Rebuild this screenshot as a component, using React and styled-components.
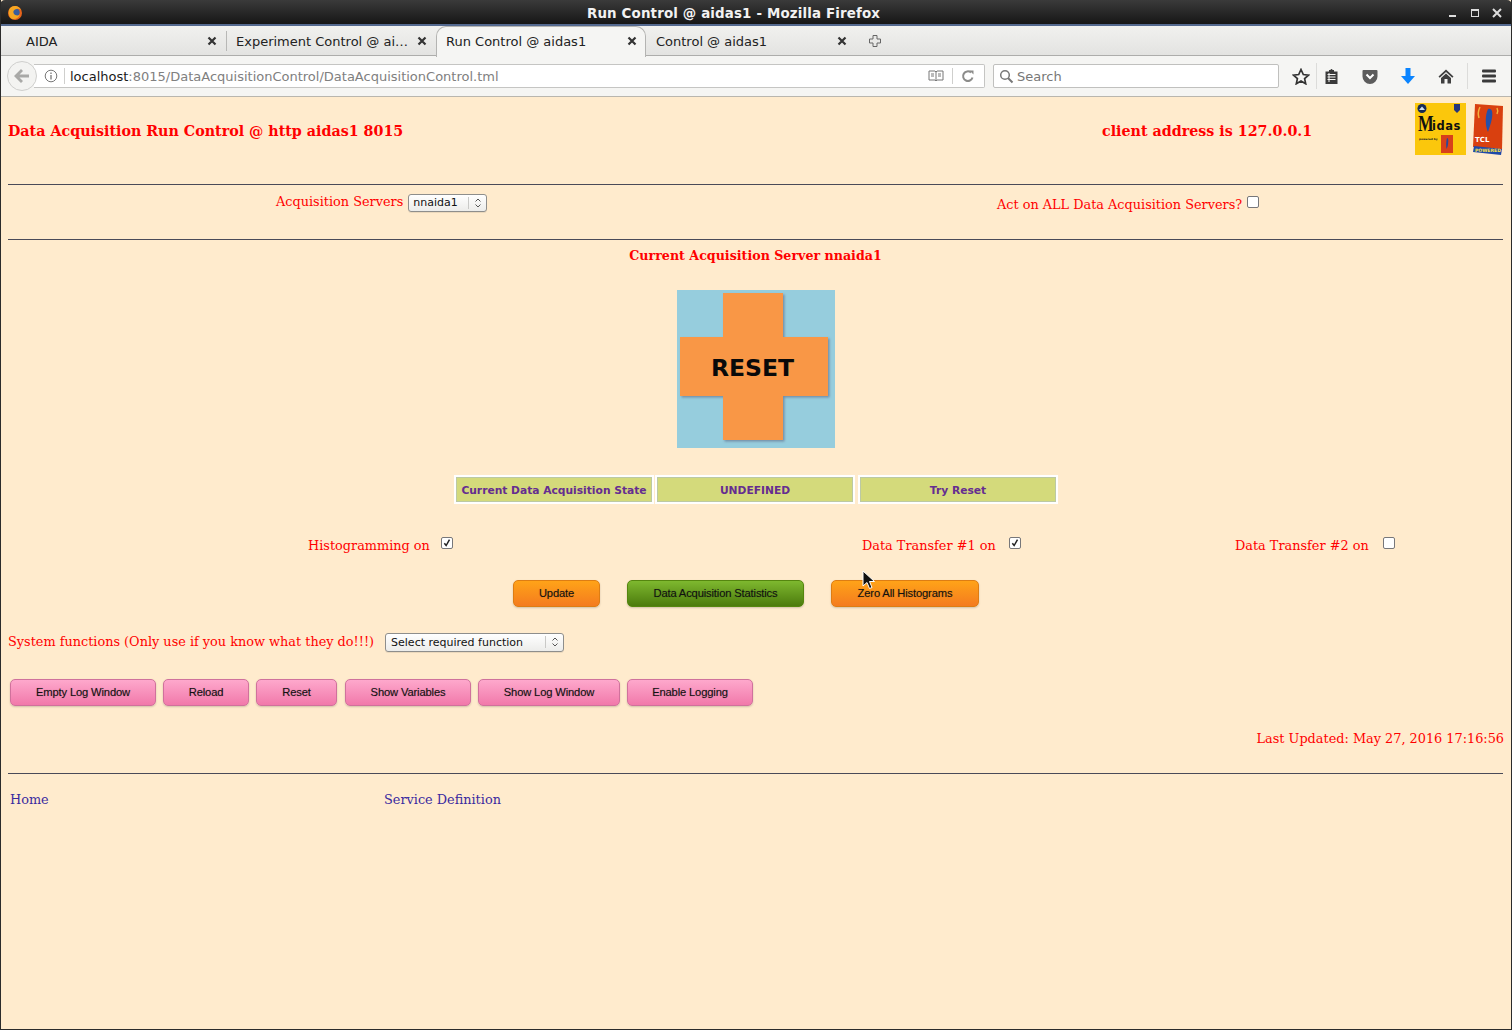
import React from "react";
import styled, { createGlobalStyle } from "styled-components";

const GlobalStyle = createGlobalStyle`
  html, body { margin: 0; padding: 0; height: 100%; background: #ffebcd; }
  #root { height: 100%; }
`;

const Window = styled.div`
  position: relative;
  width: 1512px;
  height: 1030px;
  overflow: hidden;
  display: flex;
  flex-direction: column;
  background: #ffebcd;
  border-left: 1px solid #2b2b2b;
  border-right: 1px solid #2b2b2b;
  border-bottom: 1px solid #2b2b2b;
  box-sizing: border-box;
`;

const TitleBar = styled.div`
  height: 22px;
  margin: 0 -1px;
  flex: none;
  display: flex;
  align-items: center;
  padding: 2px 10px 0 7px;
  background: linear-gradient(#3a3a3a, #2c2c2c 40%, #161616);
  border-bottom: 2px solid #54698f;
  border-radius: 5px 5px 0 0;
  color: #f2f2f2;
  font: bold 13.4px "DejaVu Sans", sans-serif;
`;

const TitleText = styled.div`
  flex: 1;
  text-align: center;
  padding-right: 4px;
  letter-spacing: 0.15px;
`;

const WinButtons = styled.div`
  display: flex;
  gap: 12px;
  align-items: center;
`;

const TabStrip = styled.div`
  height: 29px;
  flex: none;
  display: flex;
  align-items: center;
  padding-left: 15px;
  background: linear-gradient(#f1f1ef, #e3e3e1);
  border-bottom: 1px solid #adadab;
  font: 13px "DejaVu Sans", sans-serif;
  color: #222;
`;

const Tab = styled.div`
  position: relative;
  width: 210px;
  height: 100%;
  flex: none;
  box-sizing: border-box;
  display: flex;
  align-items: center;
  justify-content: space-between;
  padding: 1px 9px 0 10px;
  ${(p) =>
    p.$active &&
    `
    background: #f5f5f3;
    margin-bottom: -2px;
    height: calc(100% + 2px);
    padding: 0 8px 2px 9px;
    border-top: 1px solid #b4b4b2;
    border-radius: 10px 10px 0 0;
    border-left: 1px solid #b4b4b2;
    border-right: 1px solid #b4b4b2;
  `}
  ${(p) =>
    p.$divider &&
    `
    &::before {
      content: "";
      position: absolute;
      left: 0;
      top: 5px;
      bottom: 4px;
      width: 1px;
      background: #b8b8b6;
    }
  `}
`;

const TabLabel = styled.span`
  white-space: nowrap;
`;

const NewTab = styled.div`
  width: 38px;
  display: flex;
  justify-content: center;
  align-items: center;
`;

const NavBar = styled.div`
  height: 41px;
  flex: none;
  display: flex;
  align-items: center;
  padding: 0 0 0 6px;
  background: #f5f5f3;
  border-bottom: 1px solid #b9b6ae;
  box-sizing: border-box;
  font: 13px "DejaVu Sans", sans-serif;
`;

const BackCircle = styled.div`
  width: 30px;
  height: 30px;
  flex: none;
  box-sizing: border-box;
  border: 1px solid #cfcfcd;
  border-radius: 50%;
  background: #f3f3f1;
  display: flex;
  align-items: center;
  justify-content: center;
  position: relative;
  z-index: 1;
`;

const UrlBar = styled.div`
  width: 951px;
  height: 24px;
  margin-left: -3px;
  box-sizing: border-box;
  background: #fff;
  border: 1px solid #c5c5c3;
  border-left: none;
  border-radius: 0 2px 2px 0;
  display: flex;
  align-items: center;
  padding: 0 9px 0 10px;
`;

const UrlSep = styled.span`
  width: 1px;
  height: 16px;
  background: #cfcfcd;
  margin: ${(p) => p.$margin};
`;

const UrlText = styled.div`
  flex: 1;
  color: #808080;
  white-space: nowrap;
  b {
    font-weight: normal;
    color: #1a1a1a;
  }
`;

const SearchBox = styled.div`
  width: 286px;
  height: 24px;
  margin-left: 8px;
  box-sizing: border-box;
  background: #fff;
  border: 1px solid #c0c0be;
  border-radius: 2px;
  display: flex;
  align-items: center;
  gap: 3px;
  padding-left: 5px;
  color: #777;
`;

const Tools = styled.div`
  display: flex;
  align-items: center;
  margin-left: 13px;
`;

const ToolSlot = styled.div`
  width: ${(p) => p.$w || 38}px;
  margin-right: ${(p) => p.$mr || 0}px;
  display: flex;
  justify-content: center;
  align-items: center;
`;

const ToolSep = styled.span`
  width: 1px;
  height: 26px;
  margin-left: ${(p) => p.$ml}px;
  background: #dcdcda;
`;

const Page = styled.main`
  flex: 1;
  padding: 0 8px 0 7px;
  color: #ff0000;
  font: 12.85px "DejaVu Serif", serif;
`;

const HeaderRow = styled.header`
  height: 87px;
  box-sizing: border-box;
  padding-bottom: 19px;
  display: grid;
  grid-template-columns: 1094px 313px auto;
  align-items: center;
  font-size: 14.27px;
  font-weight: bold;
`;

const Logos = styled.div`
  display: flex;
  gap: 6px;
  margin-bottom: 4px;
`;

const Rule = styled.hr`
  margin: 0;
  border: none;
  height: 1px;
  background: #4a4a58;
`;

const ServersRow = styled.section`
  height: 54px;
  display: grid;
  padding-left: 268px;
  grid-template-columns: 721px auto;
`;

const ServerCell = styled.div`
  display: flex;
  align-items: flex-start;
  padding-top: ${(p) => p.$top}px;
  line-height: 16px;
  white-space: nowrap;
`;

const ServerCaption = styled.span`
  margin-right: 5px;
`;

const SelectBox = styled.div`
  width: ${(p) => p.$w}px;
  height: ${(p) => p.$h}px;
  box-sizing: border-box;
  border: 1px solid #8e8e8c;
  border-radius: 3px;
  background: linear-gradient(#ffffff, #ececea);
  color: #111;
  display: flex;
  align-items: center;
  padding: 0 0 1px 4px;
  font: 11px "DejaVu Sans", sans-serif;
  box-shadow: 0 1px 0 rgba(0, 0, 0, 0.08);
`;

const SelectLabel = styled.span`
  flex: 1;
  white-space: nowrap;
  padding-left: ${(p) => p.$pad || 0}px;
`;

const SelectArrow = styled.span`
  width: 17px;
  height: 12px;
  border-left: 1px solid #c9c9c7;
  display: flex;
  justify-content: center;
  align-items: center;
`;

const CheckBox = styled.span`
  width: 12px;
  height: 12px;
  flex: none;
  box-sizing: border-box;
  display: inline-flex;
  align-items: center;
  justify-content: center;
  background: #fff;
  border: 1px solid #77777a;
  border-radius: 2px;
  margin-left: ${(p) => p.$gap || 0}px;
  margin-top: ${(p) => p.$top || 0}px;
`;

const CurrentServer = styled.h2`
  margin: 0;
  padding-top: 8px;
  text-align: center;
  font-size: 12.65px;
  line-height: 16px;
  font-weight: bold;
`;

const ResetTile = styled.div`
  width: 158px;
  height: 158px;
  margin: 26px auto 0;
`;

const StateTable = styled.div`
  margin-top: 27px;
  padding-left: 446px;
  display: flex;
`;

const StateCell = styled.div`
  box-sizing: border-box;
  width: 200px;
  height: 29px;
  margin-right: ${(p) => p.$mr || 0}px;
  padding-top: 1px;
  border: 2px solid #fff;
  background: #d4da7b;
  box-shadow: inset 0 0 0 1px #bcc9a4;
  color: #652d90;
  font: bold 10.7px "DejaVu Sans", sans-serif;
  display: flex;
  align-items: center;
  justify-content: center;
  white-space: nowrap;
`;

const ToggleRow = styled.section`
  margin-top: 32px;
  height: 20px;
  padding-left: 300px;
  display: grid;
  grid-template-columns: 554px 373px auto;
`;

const Toggle = styled.div`
  display: flex;
  line-height: 20px;
  white-space: nowrap;
`;

const ButtonRow = styled.div`
  display: flex;
  gap: ${(p) => p.$gap}px;
  padding-left: ${(p) => p.$left}px;
  margin-top: ${(p) => p.$top}px;
`;

const palette = {
  orange: ["#ffa318", "#f47b1f", "#dd7d13"],
  green: ["#7eb82f", "#4c7b0d", "#55860f"],
  pink: ["#fea8cc", "#f179aa", "#d0719c"],
};

const ActionButton = styled.button`
  box-sizing: border-box;
  height: 27px;
  width: ${(p) => p.$w}px;
  margin-right: ${(p) => p.$mr || 0}px;
  padding: 0 0 2px;
  border: 1px solid ${(p) => palette[p.$tone][2]};
  border-radius: 5px;
  background: linear-gradient(${(p) => palette[p.$tone][0]}, ${(p) => palette[p.$tone][1]});
  box-shadow: 0 1px 2px rgba(0, 0, 0, 0.18);
  color: #111;
  font: 11.2px "Liberation Sans", sans-serif;
  letter-spacing: -0.15px;
  text-shadow: 0 0 1px rgba(0, 0, 0, 0.3);
  white-space: nowrap;
`;

const SystemRow = styled.section`
  margin-top: 26px;
  height: 20px;
  display: flex;
  align-items: flex-start;
  gap: 11px;
  line-height: 18px;
  white-space: nowrap;
`;

const LastUpdated = styled.div`
  margin-top: 24px;
  margin-right: -1px;
  height: 43px;
  line-height: 18px;
  text-align: right;
  white-space: nowrap;
`;

const FooterLinks = styled.nav`
  padding: 17px 0 0 2px;
  display: grid;
  grid-template-columns: 374px auto;
  line-height: 18px;
`;

const PageLink = styled.a`
  color: #3a2a9f;
  text-decoration: none;
`;

const Cursor = styled.svg`
  position: absolute;
  left: 861px;
  top: 570px;
`;

const Chevrons = () => (
  <svg width="8" height="12" viewBox="0 0 8 12" fill="none" stroke="#555" strokeWidth="1">
    <path d="M1.5 4.5 4 2l2.5 2.5M1.5 7.5 4 10l2.5-2.5" />
  </svg>
);

const Tick = () => (
  <svg width="12" height="12" viewBox="0 0 12 12" fill="none" stroke="#222" strokeWidth="1.8">
    <path d="M2.8 6.2 5 9l4-7" />
  </svg>
);

const CloseX = () => (
  <svg width="10" height="10" viewBox="0 0 10 10" stroke="#333" strokeWidth="2.2">
    <path d="M1.5 1.5l7 7M8.5 1.5l-7 7" />
  </svg>
);

const FirefoxLogo = () => (
  <svg width="16" height="16" viewBox="0 0 16 16">
    <circle cx="8" cy="8" r="7" fill="#e8641b" />
    <circle cx="8.5" cy="7.5" r="4.2" fill="#3a5d9c" />
    <path d="M2 5c1-3 4-4.500 7-4 2 .3 4 2 5 4-2-1.500-4-1.500-6-.5-2 1-2 3-1 4.500 1 1.500 4 2 6 .5-1 3-4 5-7 4.500C2.500 13.500 1 9 2 5z" fill="#f5a623" />
  </svg>
);

const MidasLogo = () => (
  <svg width="51" height="52" viewBox="0 0 51 52">
    <rect width="51" height="52" fill="#fbc70c" />
    <circle cx="7" cy="5.500" r="4.500" fill="#162a55" />
    <path d="M4 7l3-3.500 3 3.500z" fill="#cfe0f0" />
    <path d="M39 1h6v6l-3 3-3-3z" fill="#24357c" />
    <text transform="translate(3 28) scale(0.72 1)" fontFamily="Liberation Serif, serif" fontWeight="bold" fontSize="23" fill="#111">M</text>
    <text x="17" y="27" fontFamily="DejaVu Sans, sans-serif" fontWeight="bold" fontSize="11.500" letterSpacing="0.500" fill="#111">idas</text>
    <text x="4" y="37" fontFamily="DejaVu Sans, sans-serif" fontWeight="bold" fontSize="2.800" fill="#222">powered by</text>
    <rect x="26" y="32" width="12" height="18" fill="#d8401a" />
    <path d="M32 35c1.500 0 1.500 3 1 6 0 2-1 4-1.500 5-.5-3-.5-8 .5-11z" fill="#27489b" />
  </svg>
);

const TclLogo = () => (
  <svg width="32" height="52" viewBox="0 0 32 52">
    <path d="M3 1l28 2-1 44L1 44z" fill="#d9400f" />
    <path d="M16 6c4-1 5 3 4 9-1 6-3 10-4 14-3-6-3-17 0-23z" fill="#2450a8" />
    <path d="M8 4c-2 4-2 8-1 11M25 5c1 2 1 4 0 6" stroke="#f3b03c" strokeWidth="1.500" fill="none" />
    <path d="M2 43l28 3-1 6L1 49z" fill="#1f49a8" />
    <text x="3" y="39" fontFamily="DejaVu Sans, sans-serif" fontWeight="bold" fontSize="7" fill="#fff">TCL</text>
    <text x="3" y="49" fontFamily="DejaVu Sans, sans-serif" fontWeight="bold" fontSize="4.600" fill="#f6e04a">POWERED</text>
  </svg>
);

const ResetImage = () => (
  <svg width="158" height="158" viewBox="0 0 158 158">
    <defs>
      <filter id="soft" x="-10%" y="-10%" width="120%" height="120%">
        <feGaussianBlur stdDeviation="0.800" />
      </filter>
    </defs>
    <rect width="158" height="158" fill="#96cddd" />
    <path
      d="M46 3h60v44h45v59h-45v44H46v-44H3V47h43z"
      fill="#6c7f9a"
      opacity="0.8"
      transform="translate(1.500 1.500)"
      filter="url(#soft)"
    />
    <path d="M46 3h60v44h45v59h-45v44H46v-44H3V47h43z" fill="#f99746" />
    <text x="75.500" y="85.500" textAnchor="middle" fontFamily="DejaVu Sans, sans-serif" fontWeight="bold" fontSize="23.500" fill="#0a0a0a">
      RESET
    </text>
  </svg>
);

const App = () => {
  return (
    <Window>
      <GlobalStyle />
      <TitleBar>
        <FirefoxLogo />
        <TitleText>Run Control @ aidas1 - Mozilla Firefox</TitleText>
        <WinButtons>
          <svg width="10" height="10" viewBox="0 0 10 10"><rect x="1" y="7" width="7" height="2" fill="#ddd" /></svg>
          <svg width="10" height="10" viewBox="0 0 10 10" fill="none" stroke="#ddd"><rect x="1.500" y="1.500" width="7" height="7" /><path d="M1 2h8" strokeWidth="2" /></svg>
          <svg width="10" height="10" viewBox="0 0 10 10" stroke="#ddd" strokeWidth="2"><path d="M1 1l8 8M9 1l-8 8" /></svg>
        </WinButtons>
      </TitleBar>
      <TabStrip>
        <Tab><TabLabel>AIDA</TabLabel><CloseX /></Tab>
        <Tab $divider><TabLabel>Experiment Control @ ai…</TabLabel><CloseX /></Tab>
        <Tab $active><TabLabel>Run Control @ aidas1</TabLabel><CloseX /></Tab>
        <Tab><TabLabel>Control @ aidas1</TabLabel><CloseX /></Tab>
        <NewTab>
          <svg width="14" height="14" viewBox="0 0 14 14" fill="#e8e8e6" stroke="#666">
            <path d="M5 1.500h4v3.500h3.500v4H9v3.500H5V9H1.500V5H5z" />
          </svg>
        </NewTab>
      </TabStrip>
      <NavBar>
        <BackCircle>
          <svg width="18" height="16" viewBox="0 0 18 16" fill="#a9a9a7">
            <path d="M8 1l2 2-3.500 3.500H16v3H6.500L10 13l-2 2-7-7z" />
          </svg>
        </BackCircle>
        <UrlBar>
          <svg width="14" height="14" viewBox="0 0 14 14" fill="none" stroke="#777">
            <circle cx="7" cy="7" r="5.800" />
            <path d="M7 6v4.500M7 3.500v1.500" strokeWidth="1.300" />
          </svg>
          <UrlSep $margin="0 5px 0 6px" />
          <UrlText><b>localhost</b>:8015/DataAcquisitionControl/DataAcquisitionControl.tml</UrlText>
          <svg width="16" height="14" viewBox="0 0 16 14" fill="none" stroke="#777">
            <path d="M1 2h6l1 1 1-1h6v9H9l-1 1-1-1H1zM8 3v8M3 5h3M3 7h3M10 5h3M10 7h3" />
          </svg>
          <UrlSep $margin="0 8px 0 8px" />
          <svg width="14" height="14" viewBox="0 0 14 14" fill="none" stroke="#8c8c8a" strokeWidth="2">
            <path d="M11.500 8.500A4.800 4.800 0 1 1 10 3.500" />
            <path d="M8.500 1.500h4v4z" fill="#8c8c8a" stroke="none" />
          </svg>
        </UrlBar>
        <SearchBox>
          <svg width="15" height="15" viewBox="0 0 15 15" fill="none" stroke="#777" strokeWidth="1.500">
            <circle cx="6" cy="6" r="4.300" />
            <path d="M9 9l4.500 4.500" strokeWidth="2" />
          </svg>
          Search
        </SearchBox>
        <Tools>
          <ToolSlot $w={18}>
            <svg width="18" height="17" viewBox="0 0 18 17" fill="none" stroke="#333" strokeWidth="1.700">
              <path d="M9 1.500l2.300 5 5.200.6-3.900 3.500 1.100 5.200L9 13.100l-4.700 2.700 1.100-5.200L1.500 7.100l5.200-.6z" />
            </svg>
          </ToolSlot>
          <ToolSep $ml={6} />
          <ToolSlot $w={29} $mr={5}>
            <svg width="15" height="17" viewBox="0 0 15 17" fill="#3a3a3a">
              <path d="M5 2h1.500a1 1 0 0 1 2 0H10v1.500h3.500V16h-12V3.500H5z" />
              <path d="M3.500 6.500h8M3.500 9h8M3.500 11.500h8M5 5v9" stroke="#f5f5f3" strokeWidth="1" />
            </svg>
          </ToolSlot>
          <ToolSlot>
            <svg width="16" height="15" viewBox="0 0 16 15">
              <path d="M1.500 1h13a1 1 0 0 1 1 1v5.500a7.500 7.500 0 0 1-15 0V2a1 1 0 0 1 .9-1z" fill="#5c5c5c" />
              <path d="M4.500 5.500L8 9l3.500-3.500" stroke="#fff" strokeWidth="2" fill="none" />
            </svg>
          </ToolSlot>
          <ToolSlot>
            <svg width="14" height="16" viewBox="0 0 14 16" fill="#0a84ff">
              <path d="M4.500 0h5v8H14l-7 8-7-8h4.500z" />
            </svg>
          </ToolSlot>
          <ToolSlot>
            <svg width="16" height="15" viewBox="0 0 16 15" fill="#3f3f3f">
              <path d="M8 .5l7.500 7-1.200 1.300L8 3 1.700 8.800.5 7.500z" />
              <path d="M3 9l5-4.500L13 9v5.500H9.500V10h-3v4.500H3z" />
            </svg>
          </ToolSlot>
          <ToolSep $ml={2} />
          <ToolSlot $w={42}>
            <svg width="16" height="14" viewBox="0 0 16 14" fill="#3a3a3a">
              <rect x="1" y="0.500" width="14" height="3" rx="1" />
              <rect x="1" y="5.500" width="14" height="3" rx="1" />
              <rect x="1" y="10.500" width="14" height="3" rx="1" />
            </svg>
          </ToolSlot>
        </Tools>
      </NavBar>
      <Page>
        <HeaderRow>
          <span>Data Acquisition Run Control @ http aidas1 8015</span>
          <span>client address is 127.0.0.1</span>
          <Logos>
            <MidasLogo />
            <TclLogo />
          </Logos>
        </HeaderRow>
        <Rule />
        <ServersRow>
          <ServerCell $top={9}>
            <ServerCaption>Acquisition Servers</ServerCaption>
            <SelectBox $w={79} $h={18}>
              <SelectLabel>nnaida1</SelectLabel>
              <SelectArrow><Chevrons /></SelectArrow>
            </SelectBox>
          </ServerCell>
          <ServerCell $top={12}>
            Act on ALL Data Acquisition Servers?
            <CheckBox $gap={5} $top={-1} />
          </ServerCell>
        </ServersRow>
        <Rule />
        <CurrentServer>Current Acquisition Server nnaida1</CurrentServer>
        <ResetTile><ResetImage /></ResetTile>
        <StateTable>
          <StateCell $mr={1}>Current Data Acquisition State</StateCell>
          <StateCell $mr={3}>UNDEFINED</StateCell>
          <StateCell>Try Reset</StateCell>
        </StateTable>
        <ToggleRow>
          <Toggle>Histogramming on<CheckBox $gap={11} $top={1}><Tick /></CheckBox></Toggle>
          <Toggle>Data Transfer #1 on<CheckBox $gap={13} $top={1}><Tick /></CheckBox></Toggle>
          <Toggle>Data Transfer #2 on<CheckBox $gap={14} $top={1} /></Toggle>
        </ToggleRow>
        <ButtonRow $gap={27} $left={505} $top={24}>
          <ActionButton $tone="orange" $w={87}>Update</ActionButton>
          <ActionButton $tone="green" $w={177}>Data Acquisition Statistics</ActionButton>
          <ActionButton $tone="orange" $w={148}>Zero All Histograms</ActionButton>
        </ButtonRow>
        <SystemRow>
          <span>System functions (Only use if you know what they do!!!)</span>
          <SelectBox $w={179} $h={19}>
            <SelectLabel $pad={1}>Select required function</SelectLabel>
            <SelectArrow><Chevrons /></SelectArrow>
          </SelectBox>
        </SystemRow>
        <ButtonRow $gap={7} $left={2} $top={26}>
          <ActionButton $tone="pink" $w={146}>Empty Log Window</ActionButton>
          <ActionButton $tone="pink" $w={86}>Reload</ActionButton>
          <ActionButton $tone="pink" $w={81} $mr={1}>Reset</ActionButton>
          <ActionButton $tone="pink" $w={126}>Show Variables</ActionButton>
          <ActionButton $tone="pink" $w={142}>Show Log Window</ActionButton>
          <ActionButton $tone="pink" $w={126}>Enable Logging</ActionButton>
        </ButtonRow>
        <LastUpdated>Last Updated: May 27, 2016 17:16:56</LastUpdated>
        <Rule />
        <FooterLinks>
          <PageLink href="#">Home</PageLink>
          <PageLink href="#">Service Definition</PageLink>
        </FooterLinks>
      </Page>
      <Cursor width="14" height="20" viewBox="0 0 14 20">
        <path d="M1 1v15l4-3.500 2.500 6 2.500-1-2.500-6h5z" fill="#111" stroke="#fff" strokeWidth="1" />
      </Cursor>
    </Window>
  );
};

export default App;
